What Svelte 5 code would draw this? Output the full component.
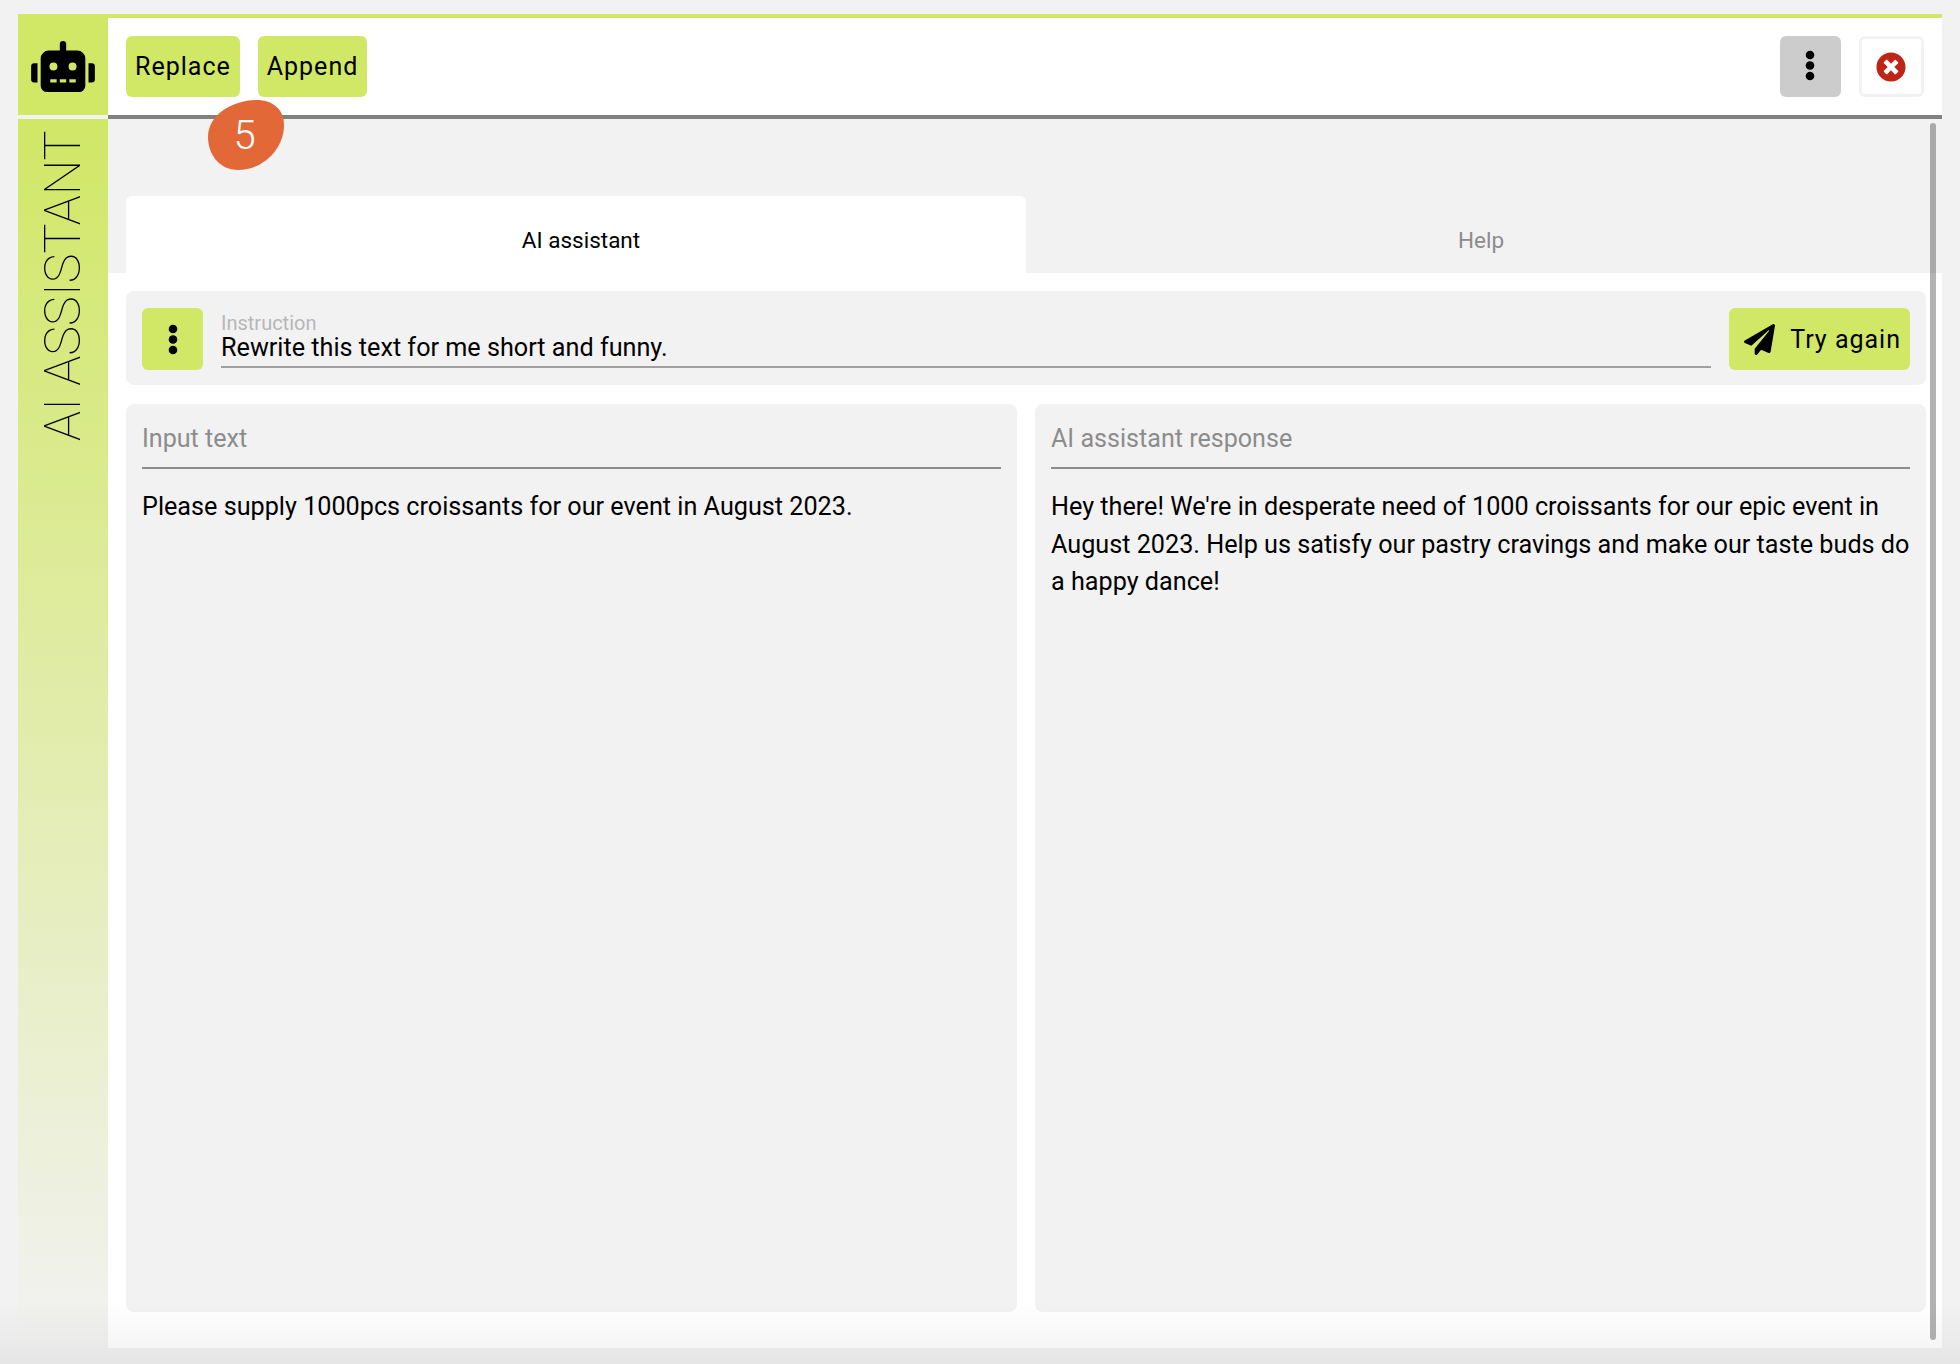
<script>
  const kebab = [5, 15.5, 26];
</script>

<div class="page">
  <div class="frame">
    <aside class="side">
      <div class="logo">
        <svg class="robot" viewBox="0 0 640 512"><path d="M32,224H64V416H32A31.96166,31.96166,0,0,1,0,384V256A31.96166,31.96166,0,0,1,32,224Zm512-48V448a64.06328,64.06328,0,0,1-64,64H160a64.06328,64.06328,0,0,1-64-64V176a79.974,79.974,0,0,1,80-80H288V32a32,32,0,0,1,64,0V96H464A79.974,79.974,0,0,1,544,176ZM264,256a40,40,0,1,0-40,40A39.997,39.997,0,0,0,264,256Zm-8,128H192v32h64Zm96,0H288v32h64ZM456,256a40,40,0,1,0-40,40A39.997,39.997,0,0,0,456,256Zm-8,128H384v32h64ZM640,256V384a31.96166,31.96166,0,0,1-32,32H576V224h32A31.96166,31.96166,0,0,1,640,256Z"/></svg>
      </div>
      <div class="rail"><span>AI ASSISTANT</span></div>
    </aside>
    <main class="main">
      <header class="head">
        <button class="btn">Replace</button>
        <button class="btn">Append</button>
        <span class="spacer"></span>
        <button class="square grey" aria-label="More">
          <svg class="dots" viewBox="0 0 10 31">{#each kebab as y}<circle cx="5" cy={y} r="4.3"/>{/each}</svg>
        </button>
        <button class="square close" aria-label="Close">
          <svg class="x" viewBox="0 0 512 512"><path d="M256 8C119 8 8 119 8 256s111 248 248 248 248-111 248-248S393 8 256 8zm121.6 313.1c4.7 4.7 4.7 12.3 0 17L338 377.6c-4.7 4.7-12.3 4.7-17 0L256 312l-65.1 65.6c-4.7 4.7-12.3 4.7-17 0L134.4 338c-4.7-4.7-4.7-12.3 0-17l65.6-65-65.6-65.1c-4.7-4.7-4.7-12.3 0-17l39.6-39.6c4.7-4.7 12.3-4.7 17 0l65 65.7 65.1-65.6c4.7-4.7 12.3-4.7 17 0l39.6 39.6c4.7 4.7 4.7 12.3 0 17L312 256l65.6 65.1z"/></svg>
        </button>
      </header>
      <section class="body">
        <div class="tabs">
          <div class="tab active">AI assistant</div>
          <div class="tab">Help</div>
        </div>
        <div class="content">
          <div class="instruction">
            <button class="square green" aria-label="Prompts">
              <svg class="dots" viewBox="0 0 10 31">{#each kebab as y}<circle cx="5" cy={y} r="4.3"/>{/each}</svg>
            </button>
            <div class="field">
              <div class="label">Instruction</div>
              <div class="value">Rewrite this text for me short and funny.</div>
            </div>
            <button class="btn try">
              <svg class="plane" viewBox="0 0 512 512"><path d="M476 3.2L12.5 270.6c-18.1 10.4-15.8 35.6 2.2 43.2L121 358.4l287.3-253.2c5.5-4.9 13.3 2.6 8.6 8.3L176 407v80.5c0 23.6 28.5 32.9 42.5 15.8L282 426l124.6 52.2c14.2 6 30.4-2.9 33-18.2l72-432C515 7.8 493.3-6.8 476 3.2z"/></svg>
              Try again
            </button>
          </div>
          <div class="columns">
            <article class="panel">
              <h2>Input text</h2>
              <p>Please supply 1000pcs croissants for our event in August 2023.</p>
            </article>
            <article class="panel">
              <h2>AI assistant response</h2>
              <p>Hey there! We're in desperate need of 1000 croissants for our epic event in August 2023. Help us satisfy our pastry cravings and make our taste buds do a happy dance!</p>
            </article>
          </div>
        </div>
        <div class="scrollbar"></div>
      </section>
    </main>
  </div>
  <div class="badge">
    <svg viewBox="208 100 76 70"><path d="M257 100C271 100 284 108 284 125C284 150 262 170 238 170C220 170 208 155 208 137C208 115 232 100 257 100Z"/></svg>
    <span>5</span>
  </div>
  <div class="fade"></div>
</div>

<style>
  :global(body) {
    margin: 0;
    background: #f2f2f2;
    font-family: Roboto, "Liberation Sans", sans-serif;
  }
  .page {
    position: relative;
    height: 1364px;
    box-sizing: border-box;
    padding: 14px 18px 16px;
    overflow: hidden;
    background: #f2f2f2;
  }
  .frame {
    display: flex;
    height: 100%;
    box-sizing: border-box;
    border-top: 4px solid #d1e766;
  }
  .side {
    width: 90px;
    flex: none;
    display: flex;
    flex-direction: column;
    gap: 4px;
  }
  .logo {
    height: 97px;
    flex: none;
    background: #d1e766;
    display: flex;
    align-items: center;
    justify-content: center;
  }
  .robot {
    width: 64px;
    height: 51px;
    margin-top: -1px;
  }
  .rail {
    flex: 1;
    background: linear-gradient(#d1e766, #f2f2f2);
    display: flex;
    justify-content: center;
    padding-top: 10px;
  }
  .rail span {
    writing-mode: vertical-rl;
    transform: rotate(180deg);
    font-size: 50.3px;
    font-weight: 150;
    line-height: 50px;
    height: 312px;
    white-space: nowrap;
    color: #000;
  }
  .main {
    flex: 1;
    min-width: 0;
    display: flex;
    flex-direction: column;
    background: #fff;
  }
  .head {
    height: 97px;
    flex: none;
    box-sizing: content-box;
    display: flex;
    align-items: center;
    gap: 18px;
    padding: 0 18px;
    border-bottom: 4px solid #808080;
    background: #fff;
  }
  .spacer {
    flex: 1;
  }
  button {
    font-family: inherit;
    color: #000;
    border: 0;
    margin: 0;
    padding: 0;
  }
  .btn {
    height: 61px;
    padding: 0 9px;
    background: #d1e766;
    border-radius: 6px;
    font-size: 25px;
    letter-spacing: 1px;
    display: flex;
    align-items: center;
  }
  .square {
    width: 61px;
    height: 61px;
    box-sizing: border-box;
    border-radius: 6px;
    display: flex;
    align-items: center;
    justify-content: center;
    flex: none;
  }
  .grey {
    background: #cccccc;
  }
  .grey .dots {
    margin: 0 2px 2px 0;
  }
  .green {
    background: #d1e766;
    height: 62px;
  }
  .close {
    width: 65px;
    background: #fff;
    border: 3px solid #f2f2f2;
  }
  .dots {
    width: 10px;
    height: 31px;
  }
  .x {
    width: 30px;
    height: 30px;
    margin-right: 1px;
    fill: #be2517;
  }
  .body {
    position: relative;
    flex: 1;
    min-height: 0;
    display: flex;
    flex-direction: column;
  }
  .tabs {
    display: flex;
    background: #f2f2f2;
    padding: 77px 16px 0 18px;
  }
  .tab {
    flex: 1;
    height: 77px;
    box-sizing: border-box;
    padding: 10px 0 0 10px;
    display: flex;
    align-items: center;
    justify-content: center;
    font-size: 22.5px;
    color: #8c8c8c;
  }
  .tab.active {
    background: #fff;
    color: #000;
    border-radius: 6px 6px 0 0;
  }
  .content {
    flex: 1;
    min-height: 0;
    display: flex;
    flex-direction: column;
    gap: 19px;
    padding: 18px 16px 36px 18px;
  }
  .instruction {
    height: 94px;
    box-sizing: border-box;
    flex: none;
    display: flex;
    align-items: center;
    gap: 18px;
    padding: 2px 16px 0;
    background: #f2f2f2;
    border-radius: 8px;
  }
  .field {
    flex: 1;
    align-self: flex-start;
    margin-top: 17px;
    height: 58px;
    padding-top: 3px;
    box-sizing: border-box;
    border-bottom: 2px solid #a0a0a0;
  }
  .label {
    font-size: 20px;
    line-height: 20px;
    color: #b7b7b7;
  }
  .value {
    font-size: 25.2px;
    line-height: 30px;
    color: #000;
  }
  .try {
    height: 62px;
    padding: 0 9px 0 15px;
    gap: 15px;
  }
  .plane {
    width: 31px;
    height: 31px;
    flex: none;
  }
  .columns {
    flex: 1;
    min-height: 0;
    display: flex;
    gap: 18px;
  }
  .panel {
    flex: 1;
    min-width: 0;
    box-sizing: border-box;
    padding: 0 16px;
    background: #f2f2f2;
    border-radius: 8px;
  }
  h2 {
    margin: 0;
    height: 58px;
    padding-top: 5px;
    box-sizing: content-box;
    border-bottom: 2px solid #8c8c8c;
    display: flex;
    align-items: center;
    font-size: 25.1px;
    font-weight: 400;
    color: #8c8c8c;
  }
  p {
    margin: 19px 0 0;
    font-size: 25.2px;
    line-height: 37.5px;
    color: #000;
  }
  .scrollbar {
    position: absolute;
    top: 4px;
    bottom: 8px;
    right: 6px;
    width: 6px;
    border-radius: 3px;
    background: rgba(0, 0, 0, 0.3);
  }
  .badge {
    position: absolute;
    left: 208px;
    top: 100px;
    width: 76px;
    height: 70px;
    display: flex;
    align-items: center;
    justify-content: center;
  }
  .badge svg {
    position: absolute;
    inset: 0;
    fill: #e36838;
  }
  .badge span {
    position: relative;
    font-size: 40px;
    font-weight: 300;
    color: #fff;
    margin-right: 3px;
  }
  .fade {
    position: absolute;
    left: 0;
    right: 0;
    bottom: 0;
    height: 64px;
    background: linear-gradient(rgba(0, 0, 0, 0), rgba(0, 0, 0, 0.05));
    pointer-events: none;
  }
</style>
